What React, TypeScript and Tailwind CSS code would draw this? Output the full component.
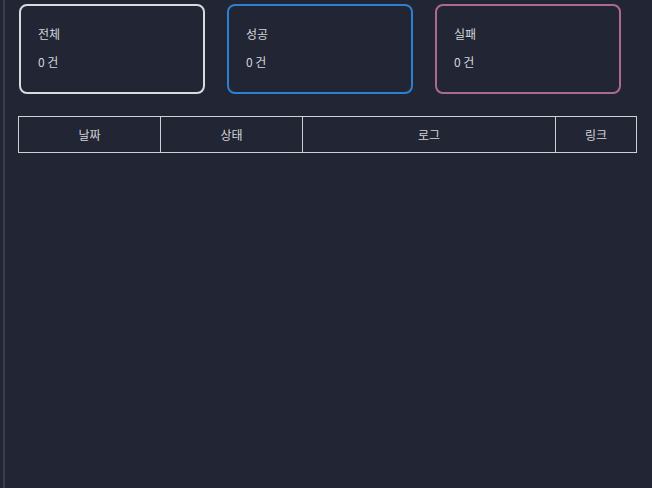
const cards = [
  { label: "전체", count: 0, border: "border-[#d9dade]" },
  { label: "성공", count: 0, border: "border-[#2e7fd2]" },
  { label: "실패", count: 0, border: "border-[#ae6a8e]" },
];

const columns = [
  { name: "날짜", width: "w-[142px]" },
  { name: "상태", width: "w-[142px]" },
  { name: "로그", width: "w-[253px]" },
  { name: "링크", width: "w-[81px]" },
];

export default function App() {
  return (
    <div
      className="min-h-screen w-full bg-[#222533] pl-[3px] text-[#d4d5da]"
      style={{ fontFamily: '"Noto Sans CJK KR", "Noto Sans", sans-serif' }}
    >
      <div className="min-h-screen border-l-2 border-[#3b3e4c] pl-[14px] pt-[4px]">
        <div className="flex gap-[22px]">
          {cards.map((c) => (
            <div
              key={c.label}
              className={`h-[90px] w-[186px] rounded-lg border-2 ${c.border} px-[17px] pt-[18px]`}
            >
              <p className="m-0 text-[12px] leading-[20px]">{c.label}</p>
              <p className="m-0 mt-[8px] text-[12px] leading-[20px]">{c.count} 건</p>
            </div>
          ))}
        </div>
        <table className="mt-[22px] ml-[-1px] border-collapse">
          <thead>
            <tr>
              {columns.map((col) => (
                <th
                  key={col.name}
                  className={`${col.width} h-[36px] border border-[#cfd0d4] p-0 text-center text-[12px] font-normal text-[#d4d5da]`}
                >
                  {col.name}
                </th>
              ))}
            </tr>
          </thead>
        </table>
      </div>
    </div>
  );
}
